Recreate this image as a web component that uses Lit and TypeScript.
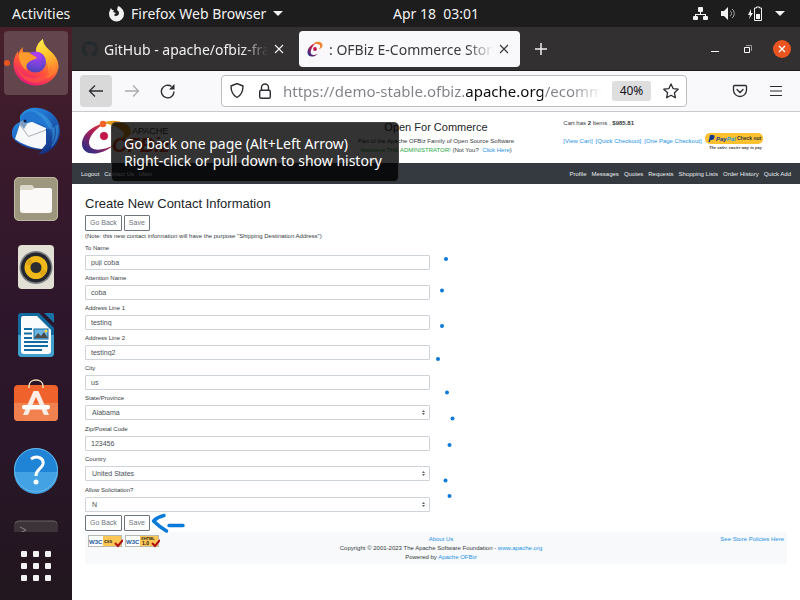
import { LitElement, html, css, svg } from "lit";
import { customElement } from "lit/decorators.js";

const firefoxIcon = html`<svg viewBox="0 0 48 48" width="48" height="48" aria-hidden="true">
  <defs>
    <linearGradient id="fxBody" x1="0.8" y1="0" x2="0.3" y2="1">
      <stop offset="0" stop-color="#ffe14a" /><stop offset="0.35" stop-color="#ff9a2a" />
      <stop offset="0.65" stop-color="#ff4f3b" /><stop offset="1" stop-color="#e5177b" />
    </linearGradient>
    <radialGradient id="fxGlobe" cx="0.55" cy="0.15" r="0.9">
      <stop offset="0" stop-color="#b83cf5" /><stop offset="0.6" stop-color="#7045d8" /><stop offset="1" stop-color="#4b3fae" />
    </radialGradient>
    <linearGradient id="fxFlame" x1="0" y1="0" x2="0.3" y2="1">
      <stop offset="0" stop-color="#fff04f" /><stop offset="0.5" stop-color="#ffc52e" /><stop offset="1" stop-color="#ff7a30" />
    </linearGradient>
  </defs>
  <path d="M11 8c-1 3 0 5 1 6 3-1 6-1 8 0l4-1c0-6 3-10 7-13 0 5 3 8 6 11 6 5 9 10 9.500 16C46 38 36 46.500 24 46.500S1.500 37 1.500 25C1.500 19 4 15 6 12l0 4c1-4 3-6 5-8z" fill="url(#fxBody)" />
  <path d="M31 0c0 5 3 8 6 11 6 5 9 10 9 15-1 7-6 12-12 13 3-5 3-13-1-18-3-3-8-4-9-8 0-6 3-10 7-13z" fill="url(#fxFlame)" />
  <circle cx="23.500" cy="23" r="10.500" fill="url(#fxGlobe)" />
  <path d="M7 14c4-1 9-1 12 1 2 1 5 3 6 4-3 2-6 2-8 4-3 2-3 5-2 9-6-5-9-11-8-18z" fill="#ff9a2c" />
  <path d="M5 27c4 10 14 15 24 11 6-2 9-7 10-12 1 9-6 17-15 18-10 0-17-7-19-17z" fill="#ff5a3c" opacity="0.6" />
</svg>`;

const thunderbirdIcon = html`<svg viewBox="0 0 48 48" width="48" height="48" aria-hidden="true">
  <defs>
    <linearGradient id="tbBody" x1="0" y1="0" x2="0.7" y2="1">
      <stop offset="0" stop-color="#2f9bea" /><stop offset="0.45" stop-color="#1f6fca" /><stop offset="1" stop-color="#132f80" />
    </linearGradient>
  </defs>
  <path d="M8 9C12 2 20 0 26 1c12 1 22 10 22 23 0 8-4 16-11 20-4 3-8 3-11 3l5-4C16 43 3 36 0 29c-1-6 2-12 8-14 0-3 0-4 0-6z" fill="url(#tbBody)" />
  <path d="M8 17l10-3 16 7v16l-4 5C20 41 9 37 3 32z" fill="#f7f8fa" />
  <path d="M10 9c6-7 18-6 24 2 3 5 4 9 2 12-3-5-8-7-14-8-5 0-9 2-10 4-3-3-4-6-2-10z" fill="#2376cf" />
  <path d="M8 18l8.500 11.500L34 23" fill="none" stroke="#a9adb5" stroke-width="1" />
  <path d="M17 3c11 0 22 8 24 18l5-4c2 10 0 17-7 24 2-6 2-13-2-20C33 12 26 6 17 3z" fill="#3fa2e6" opacity="0.55" />
  <path d="M34 22c4 6 3 14-2 21M39 22c2 7 1 13-3 19M43 20c1 7 0 12-3 17" stroke="#164b9e" stroke-width="1" fill="none" />
  <path d="M7 16l4-3 4 4-3 5z" fill="#7d9dc2" /><circle cx="13" cy="14" r="1.500" fill="#0d1c44" />
</svg>`;

const filesIcon = html`<svg viewBox="0 0 48 48" width="48" height="48" aria-hidden="true">
  <rect x="2" y="2" width="44" height="44" rx="5" fill="#9e977f" /><rect x="2.500" y="2.500" width="43" height="43" rx="5" fill="none" stroke="#bfb9a4" />
  <path d="M8 12q0-2 2-2h9q1 0 2 1l2 3v5H8z" fill="#ddd8c9" />
  <path d="M8 16q0-1 2-1h9c2 0 3-2 5-2h14q2 0 2 2v20q0 3-3 3H11q-3 0-3-3z" fill="#faf9f7" />
</svg>`;

const musicIcon = html`<svg viewBox="0 0 48 48" width="48" height="48" aria-hidden="true">
  <rect x="6" y="2" width="36" height="44" rx="4" fill="#e2dfd4" />
  <circle cx="24" cy="24.500" r="16.500" fill="#7d8186" /><circle cx="24" cy="24.500" r="15" fill="#23262c" />
  <circle cx="24" cy="24.500" r="11.500" fill="#efb91c" /><path d="M24 24.500L13 21a11.500 11.500 0 0 1 5-6zM24 24.500L35 28a11.500 11.500 0 0 1-5 6z" fill="#dba516" />
  <circle cx="24" cy="24.500" r="5.500" fill="#2c2d2f" />
</svg>`;

const writerIcon = html`<svg viewBox="0 0 48 48" width="48" height="48" aria-hidden="true">
  <path d="M9 2h18l15 15v25q0 4-4 4H10q-4 0-4-4V5q0-3 3-3z" fill="#106a9e" />
  <path d="M6 24h36v18q0 4-4 4H10q-4 0-4-4z" fill="#3fa0cb" />
  <path d="M11 5h14l14 14v21q0 3-3 3H12q-3 0-3-3V8q0-3 2-3z" fill="#f9fbfc" />
  <path d="M32 2h8q2 0 2 2v8z" fill="#1773a8" />
  <path d="M12 18h8M12 22.500h8M12 27h8M12 31h24M12 35h24M12 39h18" stroke="#126ca3" stroke-width="2" />
  <rect x="22" y="18" width="14" height="10" fill="#6eb6e2" stroke="#126ca3" /><path d="M22 27l4-5 3 3 3-4 4 6z" fill="#4d4d4d" /><circle cx="34" cy="20" r="1.500" fill="#ffd84a" />
</svg>`;

const softwareIcon = html`<svg viewBox="0 0 48 48" width="48" height="48" aria-hidden="true">
  <rect x="2" y="6" width="44" height="36" rx="4" fill="#f0622c" /><path d="M2 24h44v14q0 4-4 4H6q-4 0-4-4z" fill="#f28150" />
  <path d="M17 9V7c0-8 14-8 14 0v2" fill="none" stroke="#f3e0b8" stroke-width="1.500" />
  <path d="M21.500 12h5L37 36h-5L24 18l-8 18h-5z" fill="#fbece6" /><rect x="10" y="26" width="28" height="4.500" rx="2" fill="#fff" />
</svg>`;

const helpIcon = html`<svg viewBox="0 0 48 48" width="48" height="48" aria-hidden="true">
  <circle cx="24" cy="23" r="22" fill="#1f84d6" /><path d="M2 25a22 22 0 0 0 44 0z" fill="#43a2e4" />
  <circle cx="24" cy="23" r="21.500" fill="none" stroke="#67b5ea" />
  <path d="M19 12c6-4 13-1 12 5-1 5-7 5-7 12" fill="none" stroke="#fff" stroke-width="3" /><circle cx="24" cy="35" r="2.500" fill="#fff" />
</svg>`;

const terminalIcon = html`<svg viewBox="0 0 48 48" width="48" height="48" aria-hidden="true">
  <rect x="2" y="6" width="44" height="36" rx="4" fill="#3b3338" /><path d="M3 8q2-2 4-2h34q3 0 4 2" stroke="#6a6266" fill="none" />
  <path d="M8 12l6 3-6 3" stroke="#8a8488" fill="none" />
</svg>`;

const closeIcon = html`<svg viewBox="0 0 10 10" width="10" height="10" aria-hidden="true"><path d="M1 1l8 8M9 1L1 9" stroke="currentColor" stroke-width="1.200" /></svg>`;

const swirl = svg`<g>
  <path d="M27 3C14 5 3 14 3 24c0 12 18 13 32 1-12 6-24 7-25-2C10 16 17 8 27 3z" fill="url(#ofSwirl)" />
  <path d="M24 3c10-5 28-1 28 9-1 6-9 9-13 6 6 0 8-4 4-7-5-5-13-7-19-8z" fill="#e39a1f" />
  <circle cx="24" cy="4" r="3.200" fill="#f0642c" /><circle cx="25" cy="16" r="4" fill="#c3184c" />
</g>`;
const swirlColours = svg`<linearGradient id="ofSwirl" x1="1" y1="0" x2="0.200" y2="1"><stop offset="0" stop-color="#ee5a2c" /><stop offset="0.500" stop-color="#b01e55" /><stop offset="1" stop-color="#2b2e87" /></linearGradient>`;

const fields = [
  { id: "to", label: "To Name", value: "puji coba" },
  { id: "attn", label: "Attention Name", value: "coba" },
  { id: "addr1", label: "Address Line 1", value: "testing" },
  { id: "addr2", label: "Address Line 2", value: "testing2" },
  { id: "city", label: "City", value: "us" },
  { id: "state", label: "State/Province", value: "Alabama", choice: true },
  { id: "zip", label: "Zip/Postal Code", value: "123456" },
  { id: "country", label: "Country", value: "United States", choice: true },
  { id: "solicit", label: "Allow Solicitation?", value: "N", choice: true },
];

const apps = [
  { name: "Firefox", icon: firefoxIcon, active: true },
  { name: "Thunderbird", icon: thunderbirdIcon },
  { name: "Files", icon: filesIcon },
  { name: "Rhythmbox", icon: musicIcon },
  { name: "LibreOffice Writer", icon: writerIcon },
  { name: "Ubuntu Software", icon: softwareIcon },
  { name: "Help", icon: helpIcon },
  { name: "Terminal", icon: terminalIcon },
];

@customElement("store-page")
class StorePage extends LitElement {
  static styles = css`
    :host { display: block; background: #fff; color: #343a40; font: 6px/8px "Liberation Sans", Arial, sans-serif; position: relative; overflow: hidden; }
    * { box-sizing: border-box; }
    a { color: #2492e6; text-decoration: none; }
    h1, h2, p { margin: 0; font-weight: 400; color: #212529; }
    p { color: #343a40; }
    .masthead { display: grid; grid-template-columns: 1fr 1fr 1fr; height: 51px; }
    .logo { padding: 8px 0 0 7px; }
    .logo svg { display: block; }
    .about { text-align: center; padding-top: 8px; white-space: nowrap; }
    .about h1 { font-size: 11px; line-height: 14px; margin-bottom: 3px; }
    .about p { line-height: 9px; }
    .green { color: #28a745; }
    .cart { padding: 7px 0 0 6px; white-space: nowrap; }
    .cartrow { display: flex; gap: 3px; align-items: center; height: 20px; margin-top: 4px; }
    .nav { background: #343a40; height: 21px; display: flex; align-items: center; justify-content: space-between; padding: 0 9px; }
    .nav div { display: flex; gap: 5px; }
    .nav a { color: #e9ecef; }
    .main { padding: 12px 13px 0; }
    .main h2 { font-size: 13px; line-height: 16px; margin-bottom: 3px; }
    .main p { line-height: 9px; }
    .actions { display: flex; gap: 2px; margin-bottom: 1px; }
    button { font: 7px/8px "Liberation Sans", Arial, sans-serif; height: 16px; padding: 0 4px; border: 1px solid #6c757d; border-radius: 1px; background: #fff; color: #6c757d; }
    .fields { width: 50%; padding: 0 6px 1px 0; }
    .field { padding-top: 3px; margin-bottom: 1px; }
    .field.choice { margin-bottom: 2px; }
    label { display: block; line-height: 8px; margin-bottom: 3px; }
    .box { position: relative; }
    input, select { display: block; width: 100%; height: 15px; border: 1px solid #ced4da; border-radius: 1px; background: #fff; color: #495057; font: 7px/9px "Liberation Sans", Arial, sans-serif; padding: 0 5px; appearance: none; }
    select { padding: 0 6px; }
    .box svg { position: absolute; right: 5px; top: 5px; pointer-events: none; }
    .footer { margin: 0 13px; background: #f8f9fa; display: grid; grid-template-columns: 1fr 2fr 1fr; padding: 3px; line-height: 9px; height: 32px; }
    .badges { display: flex; gap: 2px; align-items: flex-start; }
    .legal { text-align: center; padding-left: 10px; }
    .policies { text-align: right; }
    .marks { position: absolute; left: 0; top: 0; pointer-events: none; }
  `;

  link(text: string) {
    return html`<a href="#">${text}</a>`;
  }

  actions() {
    return html`<div class="actions"><button type="button">Go Back</button><button type="button">Save</button></div>`;
  }

  field(f: (typeof fields)[number]) {
    return html`<div class="field ${f.choice ? "choice" : ""}">
      <label for=${f.id}>${f.label}</label>
      <div class="box">${f.choice
        ? html`<select id=${f.id}><option>${f.value}</option></select>
            <svg viewBox="0 0 3 5" width="3" height="5" aria-hidden="true"><path d="M0 2l1.500-2L3 2zM0 3l1.500 2L3 3z" fill="#5c6268" /></svg>`
        : html`<input id=${f.id} type="text" .value=${f.value} />`}</div>
    </div>`;
  }

  badge(second: string, lower: string) {
    return html`<svg viewBox="0 0 35 13" width="35" height="13" role="img" aria-label="W3C ${second}">
      <rect x="0.500" y="0.500" width="33" height="11" fill="#fff" stroke="#b9b9b0" /><rect x="15" y="1" width="18" height="10" fill="#fdc655" />
      <text x="1" y="9" font-size="6" font-weight="700" fill="#1c5b9e">W3C</text>
      <text x="16" y=${lower ? 5 : 8} font-size=${lower ? 4 : 5} font-weight="700" fill="#222">${second}</text>
      ${lower ? svg`<text x="17" y="10" font-size="5" font-weight="700" fill="#222">${lower}</text>` : ""}
      <path d="M27 8l3 3 5-6" fill="none" stroke="#b01010" stroke-width="2" />
    </svg>`;
  }

  render() {
    const dots = [[374, 147], [370, 178.500], [370, 214], [366, 247], [375, 280.500], [380.500, 306.500], [377.500, 333], [373.500, 368.500], [377.500, 384]];
    return html`
      <header class="masthead">
        <div class="logo"><svg viewBox="0 0 94 36" width="94" height="36" role="img" aria-label="Apache OFBiz">
          <defs>${swirlColours}</defs>
          <text x="53" y="14" font-size="9" fill="#3b3b3b">APACHE</text>
          <text x="33" y="32" font-size="20" font-weight="700" font-style="italic" fill="#cf4727">OFBiz</text>
          ${swirl}
        </svg></div>
        <div class="about">
          <h1>Open For Commerce</h1>
          <p>Part of the Apache OFBiz Family of Open Source Software</p>
          <p><span class="green">Welcome THE ADMINISTRATOR!</span> (Not You?&nbsp; ${this.link("Click Here")})</p>
        </div>
        <div class="cart">
          <p>Cart has <b>2</b> Items , <b>$985.81</b></p>
          <div class="cartrow">${this.link("[View Cart]")}${this.link("[Quick Checkout]")}${this.link("[One Page Checkout]")}
            <svg viewBox="0 0 58 18" width="58" height="18" role="img" aria-label="Check out with PayPal">
              <rect y="1" width="58" height="11" rx="5" fill="#fdc02f" />
              <path d="M5 3h3q2 0 1.500 2.500T6.500 8H5.500L5 10H3.500z" fill="#153a8a" />
              <text x="11" y="9" font-size="6" font-weight="700" font-style="italic" fill="#153a8a">Pay<tspan fill="#1a9bdc">Pal</tspan></text>
              <text x="32" y="8" font-size="5" font-weight="700" fill="#333">Check out</text>
              <text x="4" y="17" font-size="4" font-weight="700" font-style="italic" fill="#444">The safer, easier way to pay</text>
            </svg></div>
        </div>
      </header>
      <nav class="nav">
        <div>${["Logout", "Contact Us", "Main"].map((t) => this.link(t))}</div>
        <div>${["Profile", "Messages", "Quotes", "Requests", "Shopping Lists", "Order History", "Quick Add"].map((t) => this.link(t))}</div>
      </nav>
      <main class="main">
        <h2>Create New Contact Information</h2>
        ${this.actions()}
        <p>(Note: this new contact information will have the purpose "Shipping Destination Address")</p>
        <div class="fields">${fields.map((f) => this.field(f))}</div>
        ${this.actions()}
      </main>
      <footer class="footer">
        <div class="badges">${this.badge("css", "")}${this.badge("XHTML", "1.0")}</div>
        <div class="legal">
          <p>${this.link("About Us")}</p>
          <p>Copyright © 2001-2023 The Apache Software Foundation - ${this.link("www.apache.org")}</p>
          <p>Powered by ${this.link("Apache OFBiz")}</p>
        </div>
        <div class="policies">${this.link("See Store Policies Here")}</div>
      </footer>
      <svg class="marks" viewBox="0 0 400 440" width="400" height="440" aria-hidden="true">
        ${dots.map(([x, y]) => svg`<circle cx=${x} cy=${y} r="2" fill="#0b7ad8" />`)}
        <path d="M92 403.500c-5 1-8 3-10.500 5.500 4 4 8 7 13 10M97 413.500h14" fill="none" stroke="#0b7ad8" stroke-width="3.500" stroke-linecap="round" stroke-linejoin="round" />
      </svg>
    `;
  }
}

@customElement("app-root")
class AppRoot extends LitElement {
  static styles = css`
    :host { display: grid; grid-template-rows: 27px 1fr; min-height: 100vh; font: 14px/18px "Noto Sans", sans-serif; position: relative; }
    * { box-sizing: border-box; }
    svg { display: block; flex: none; }
    button { font: inherit; color: inherit; border: 0; padding: 0; background: none; display: flex; align-items: center; justify-content: center; white-space: nowrap; }
    .topbar { background: #1d1d1d; color: #f2f2f2; display: grid; grid-template-columns: 72px 1fr auto 1fr; align-items: center; }
    .activities { padding-left: 12px; justify-content: flex-start; }
    .appmenu { margin-left: 36px; gap: 7px; justify-self: start; }
    .status { display: flex; gap: 12px; justify-self: end; align-items: center; padding-right: 15px; }
    .desk { display: grid; grid-template-columns: 72px 1fr; min-height: 0; }
    .dock { background: linear-gradient(#48202a, #3b1a2c 20%, #2d162b 50%, #291628 75%, #21161e); display: flex; flex-direction: column; height: calc(100vh - 27px); }
    .applist { flex: 1; overflow: hidden; padding: 4px 4px 0; display: flex; flex-direction: column; gap: 4px; }
    .app { flex: none; height: 64px; border-radius: 4px; position: relative; }
    .app.active { background: #63454d; }
    .app.active::before { content: ""; position: absolute; left: 0; top: 29px; width: 6px; height: 6px; border-radius: 3px; background: #e95420; }
    .grid { height: 68px; }
    .window { display: flex; flex-direction: column; min-width: 0; background: #fff; }
    .tabs { height: 44px; background: #323031; border-bottom: 1px solid #1c1b1c; display: flex; align-items: center; gap: 4px; padding: 0 9px 0 2px; color: #f0f0f0; }
    .tab { flex: 0 1 221px; height: 36px; border-radius: 4px; display: flex; align-items: center; gap: 6px; padding: 0 11px 0 8px; min-width: 0; }
    .tab.current { background: #f9f9fb; color: #3a383c; }
    .title { flex: 1; overflow: hidden; white-space: nowrap; padding-top: 2px; mask-image: linear-gradient(to right, #000 calc(100% - 26px), transparent); }
    .newtab { width: 34px; height: 32px; }
    .controls { margin-left: auto; display: flex; align-items: center; gap: 19px; }
    .toolbar { height: 41px; background: #f9f9fb; border-bottom: 1px solid #c9c9cc; display: flex; align-items: center; gap: 4px; padding: 0 8px; color: #2c2b30; }
    .tool { width: 32px; height: 32px; border-radius: 4px; }
    .tool.hover { background: #d9d9da; }
    .tool.off { color: #aaa; }
    .address { flex: 1; min-width: 0; margin: 0 33px; height: 32px; border: 1px solid #bdbdc2; border-radius: 4px; background: #fff; display: flex; align-items: center; padding: 0 7px; gap: 12px; }
    .lookup { flex: 1; min-width: 0; display: flex; align-items: center; gap: 10px; }
    .url { flex: 1; min-width: 0; border: 0; padding: 0; outline: 0; font: 15px/20px "Noto Sans", sans-serif; color: transparent; background: linear-gradient(to right, #818086 182px, #0c0c0d 182px, #0c0c0d 260px, #818086 260px); background-clip: text; -webkit-background-clip: text; mask-image: linear-gradient(to right, #000 calc(100% - 30px), transparent); }
    .zoom { width: 39px; height: 20px; border-radius: 3px; background: #dededf; color: #15141a; font-size: 12px; }
    .tip { position: absolute; left: 111px; top: 122px; background: rgba(0, 0, 0, 0.8); border: 1px solid rgba(80, 80, 80, 0.6); color: #fff; border-radius: 5px; padding: 12px 16px 12px 12px; line-height: 17px; height: 60px; white-space: nowrap; }
  `;

  render() {
    return html`
      <header class="topbar">
        <button class="activities">Activities</button>
        <button class="appmenu">
          <svg viewBox="0 0 16 16" width="16" height="16" aria-hidden="true"><path d="M3 2l1 2 2 0-1 2 3 1-2 2c1 2 5 1 5-2 0-2-2-3-2-3l1-4c3 1 6 4 6 8a7.500 7.500 0 0 1-15 0c0-2 1-4 2-6z" fill="#f2f2f2" /></svg>
          <span>Firefox Web Browser</span>
          <svg viewBox="0 0 10 6" width="10" height="6" aria-hidden="true"><path d="M0 0h10L5 5z" fill="#f2f2f2" /></svg>
        </button>
        <time>Apr 18&nbsp; 03:01</time>
        <div class="status">
          <svg viewBox="0 0 16 14" width="16" height="14" fill="#f2f2f2" aria-hidden="true"><rect x="5" y="0" width="5" height="5" rx="1" /><rect x="0" y="9" width="5" height="4" rx="1" /><rect x="10" y="9" width="5" height="4" rx="1" /><path d="M7 5h1v2h5v2h-1V8H3v1H2V7h5z" /></svg>
          <svg viewBox="0 0 15 14" width="15" height="14" fill="#f2f2f2" aria-hidden="true"><path d="M0 4h3l4-4v13L3 9H0z" /><path d="M9 4c2 1 2 4 0 5M11 2c3 2 3 7 0 9" fill="none" stroke="#aaa" /></svg>
          <svg viewBox="0 0 15 16" width="15" height="16" fill="#f2f2f2" aria-hidden="true"><path d="M3 3L0 9h2L1 13l4-6H3z" /><path d="M8.500 1h3v1h2v12.500h-7V2h2z" fill="none" stroke="#f2f2f2" /><rect x="8" y="8" width="4" height="5" /></svg>
          <svg viewBox="0 0 10 6" width="10" height="6" aria-hidden="true"><path d="M0 0h10L5 5z" fill="#f2f2f2" /></svg>
        </div>
      </header>
      <div class="desk">
        <nav class="dock" aria-label="Dock">
          <div class="applist">${apps.map((a) => html`<button class="app ${a.active ? "active" : ""}" aria-label=${a.name}>${a.icon}</button>`)}</div>
          <button class="grid" aria-label="Show Applications">
            <svg viewBox="0 0 30 30" width="30" height="30" fill="#f2f2f2" aria-hidden="true">${[0, 12, 24].map((y) => [0, 12, 24].map((x) => svg`<rect x=${x} y=${y} width="6" height="6" rx="1" />`))}</svg>
          </button>
        </nav>
        <section class="window">
          <div class="tabs">
            <div class="tab">
              <svg viewBox="0 0 16 16" width="16" height="16" aria-hidden="true"><path fill="#24292e" d="M8 0C3.580 0 0 3.580 0 8c0 3.540 2.290 6.530 5.470 7.590.4.070.55-.17.55-.38 0-.19-.01-.82-.01-1.490-2.010.37-2.530-.49-2.690-.94-.09-.23-.48-.94-.82-1.130-.28-.15-.68-.52-.01-.53.63-.01 1.080.58 1.230.82.72 1.210 1.870.87 2.330.66.07-.52.28-.87.51-1.070-1.780-.2-3.640-.89-3.640-3.950 0-.87.31-1.590.82-2.150-.08-.2-.36-1.020.08-2.120 0 0 .67-.21 2.200.82.64-.18 1.320-.27 2-.27s1.360.09 2 .27c1.530-1.040 2.200-.82 2.200-.82.44 1.100.16 1.920.08 2.120.51.56.82 1.270.82 2.150 0 3.070-1.870 3.750-3.650 3.950.29.25.54.73.54 1.480 0 1.070-.01 1.930-.01 2.200 0 .21.15.46.55.38A8.010 8.010 0 0 0 16 8c0-4.420-3.580-8-8-8z" /></svg>
              <span class="title">GitHub - apache/ofbiz-framework</span>
              <button aria-label="Close tab">${closeIcon}</button>
            </div>
            <div class="tab current">
              <svg viewBox="0 -2 34 34" width="16" height="16" aria-hidden="true"><defs>${swirlColours}</defs>
                <path d="M20 2C8 4 1 14 1 22c0 11 14 12 22 3-8 4-15 4-15-3S13 6 20 2z" fill="url(#ofSwirl)" /><path d="M16 1c6-3 17-1 17 6 0 5-4 8-8 8 4-3 4-7 1-9-3-2-7-1-10-2z" fill="#ec8233" /><circle cx="17" cy="15" r="4" fill="#c3184c" /></svg>
              <span class="title">: OFBiz E-Commerce Store: Create</span>
              <button aria-label="Close tab">${closeIcon}</button>
            </div>
            <button class="newtab" aria-label="New tab"><svg viewBox="0 0 12 12" width="12" height="12" aria-hidden="true"><path d="M6 0v12M0 6h12" stroke="#f0f0f0" stroke-width="1.500" /></svg></button>
            <div class="controls">
              <button aria-label="Minimize"><svg viewBox="0 0 12 12" width="12" height="12" aria-hidden="true"><path d="M0 8h8v1H0z" fill="#fff" /></svg></button>
              <button aria-label="Restore"><svg viewBox="0 0 12 12" width="12" height="12" fill="none" aria-hidden="true"><path d="M2.500 4.500h5v5h-5z" stroke="#fff" /><path d="M4 2.500h5.500V8" stroke="#999" /></svg></button>
              <button aria-label="Close"><svg viewBox="0 0 18 18" width="18" height="18" aria-hidden="true"><circle cx="9" cy="9" r="9" fill="#e95420" /><path d="M6 6l6 6M12 6l-6 6" stroke="#fff" stroke-width="1.300" /></svg></button>
            </div>
          </div>
          <div class="toolbar">
            <button class="tool hover" aria-label="Back"><svg viewBox="0 0 16 16" width="16" height="16" aria-hidden="true"><path d="M15 8H2M7 2.500L1.500 8 7 13.500" fill="none" stroke="currentColor" stroke-width="1.300" /></svg></button>
            <button class="tool off" aria-label="Forward"><svg viewBox="0 0 16 16" width="16" height="16" aria-hidden="true"><path d="M1 8h13M9 2.500L14.500 8 9 13.500" fill="none" stroke="currentColor" stroke-width="1.300" /></svg></button>
            <button class="tool" aria-label="Reload"><svg viewBox="0 0 16 16" width="16" height="16" aria-hidden="true"><path d="M14 8.500A6.300 6.300 0 1 1 11.500 3.500" fill="none" stroke="currentColor" stroke-width="1.400" /><path d="M14.500 1v5.500H9z" fill="currentColor" /></svg></button>
            <div class="address">
              <svg viewBox="0 0 16 16" width="16" height="16" aria-hidden="true"><path d="M8 0.500l6 2.500c0 5-1.500 9-6 11.500C3.500 12 2 8 2 3z" fill="none" stroke="#2c2b30" stroke-width="1.400" stroke-linejoin="round" /></svg>
              <div class="lookup">
                <svg viewBox="0 0 16 16" width="16" height="16" aria-hidden="true"><path d="M4.500 7V4.500a3.500 3.500 0 0 1 7 0V7" fill="none" stroke="#2c2b30" stroke-width="1.400" /><rect x="2.700" y="7.200" width="10.600" height="8" rx="1.500" fill="none" stroke="#2c2b30" stroke-width="1.400" /></svg>
                <input class="url" aria-label="Address" .value=${"https://demo-stable.ofbiz.apache.org/ecommerce/control"} />
                <button class="zoom">40%</button>
              </div>
              <svg viewBox="0 0 16 16" width="16" height="16" aria-hidden="true"><path d="M8 0.900l2.100 4.700 5.100.6-3.800 3.500 1 5.100L8 12.300l-4.400 2.500 1-5.100L.8 6.200l5.100-.6z" fill="none" stroke="#2c2b30" stroke-width="1.300" stroke-linejoin="round" /></svg>
            </div>
            <button class="tool" aria-label="Save to Pocket"><svg viewBox="0 0 16 16" width="16" height="16" aria-hidden="true"><path d="M2.500 2.500h11q1 0 1 1V7a6.500 6.500 0 0 1-13 0V3.500q0-1 1-1zM5 6.500l3 3 3-3" fill="none" stroke="currentColor" stroke-width="1.300" stroke-linecap="round" /></svg></button>
            <button class="tool" aria-label="Menu"><svg viewBox="0 0 12 12" width="12" height="12" aria-hidden="true"><path d="M0 1.500h12M0 6h12M0 10.500h12" stroke="currentColor" stroke-width="1.200" /></svg></button>
          </div>
          <store-page></store-page>
        </section>
      </div>
      <div class="tip" role="tooltip">Go back one page (Alt+Left Arrow)<br />Right-click or pull down to show history</div>
    `;
  }
}
